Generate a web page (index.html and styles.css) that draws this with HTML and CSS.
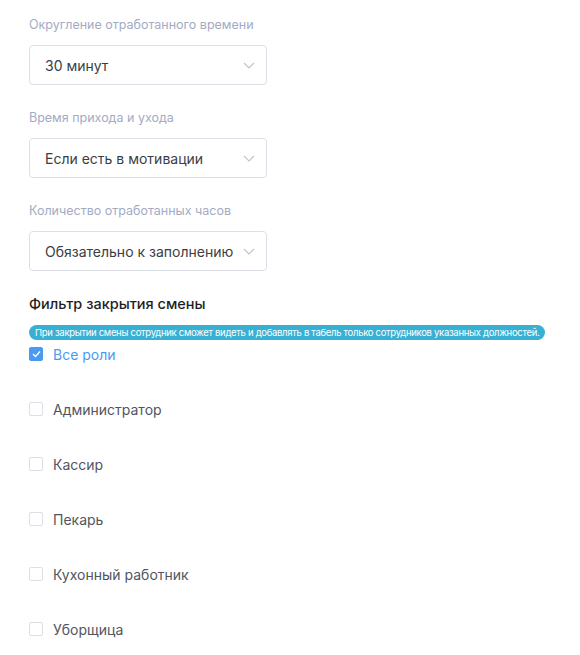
FILE: index.html
```html
<!DOCTYPE html>
<html lang="ru">
<head>
  <meta charset="UTF-8">
  <meta name="viewport" content="width=device-width, initial-scale=1.0">
  <title>Настройки смены</title>
  <link rel="stylesheet" href="styles.css">
</head>
<body>

  <div class="settings">
    <div class="field">
      <div class="field-label">Округление отработанного времени</div>
      <div class="select">
        <span>30 минут</span>
        <svg class="chevron" width="12" height="7" viewBox="0 0 12 7"><path d="M1 1l5 5 5-5" fill="none" stroke="#c0c4cc" stroke-width="1.2"/></svg>
      </div>
    </div>

    <div class="field">
      <div class="field-label">Время прихода и ухода</div>
      <div class="select">
        <span>Если есть в мотивации</span>
        <svg class="chevron" width="12" height="7" viewBox="0 0 12 7"><path d="M1 1l5 5 5-5" fill="none" stroke="#c0c4cc" stroke-width="1.2"/></svg>
      </div>
    </div>

    <div class="field">
      <div class="field-label">Количество отработанных часов</div>
      <div class="select">
        <span>Обязательно к заполнению</span>
        <svg class="chevron" width="12" height="7" viewBox="0 0 12 7"><path d="M1 1l5 5 5-5" fill="none" stroke="#c0c4cc" stroke-width="1.2"/></svg>
      </div>
    </div>

    <h3 class="section-title">Фильтр закрытия смены</h3>
    <div class="hint">При закрытии смены сотрудник сможет видеть и добавлять в табель только сотрудников указанных должностей.</div>

    <div class="roles">
      <label class="role checked">
        <span class="box">
          <svg width="9" height="8" viewBox="0 0 9 8"><path d="M1 4l2.5 2.5L8 1.5" fill="none" stroke="#fff" stroke-width="1.4"/></svg>
        </span>
        Все роли
      </label>
      <label class="role"><span class="box"></span>Администратор</label>
      <label class="role"><span class="box"></span>Кассир</label>
      <label class="role"><span class="box"></span>Пекарь</label>
      <label class="role"><span class="box"></span>Кухонный работник</label>
      <label class="role"><span class="box"></span>Уборщица</label>
    </div>
  </div>

</body>
</html>
```

FILE: styles.css
```css
body {
  font-family: Inter, "Noto Sans", sans-serif;
  background-color: #fff;
  margin: 0;
}
.settings {
  padding: 15px 0 0 29px;
}
.field {
  margin-bottom: 23px;
}
.field-label {
  font-size: 12.5px;
  line-height: 20px;
  color: #a3abc4;
  margin-bottom: 10px;
}
.select {
  width: 238px;
  height: 40px;
  box-sizing: border-box;
  border: 1px solid #dcdfe6;
  border-radius: 4px;
  display: flex;
  align-items: center;
  justify-content: space-between;
  padding: 0 11px 0 15px;
  font-size: 14px;
  color: #3a3d45;
  white-space: nowrap;
}
.select .chevron {
  display: block;
}
.section-title {
  font-size: 14.5px;
  font-weight: 500;
  line-height: 20px;
  color: #1e1e1e;
  margin: 18px 0 11px;
}
.hint {
  display: table;
  background-color: #38b0d3;
  color: #fff;
  font-size: 9.5px;
  line-height: 15px;
  padding: 0 6px;
  border-radius: 8px;
  letter-spacing: -0.3px;
  white-space: nowrap;
}
.roles {
  display: flex;
  flex-direction: column;
  gap: 35px;
  margin-top: 4px;
}
.role {
  display: flex;
  align-items: center;
  height: 20px;
  font-size: 14px;
  color: #51555f;
}
.role .box {
  width: 14px;
  height: 14px;
  box-sizing: border-box;
  border: 1px solid #dcdfe6;
  border-radius: 2px;
  margin-right: 10px;
  display: flex;
  align-items: center;
  justify-content: center;
}
.role.checked {
  color: #4a9af3;
}
.role.checked .box {
  background-color: #4a9af3;
  border-color: #4a9af3;
}
```
